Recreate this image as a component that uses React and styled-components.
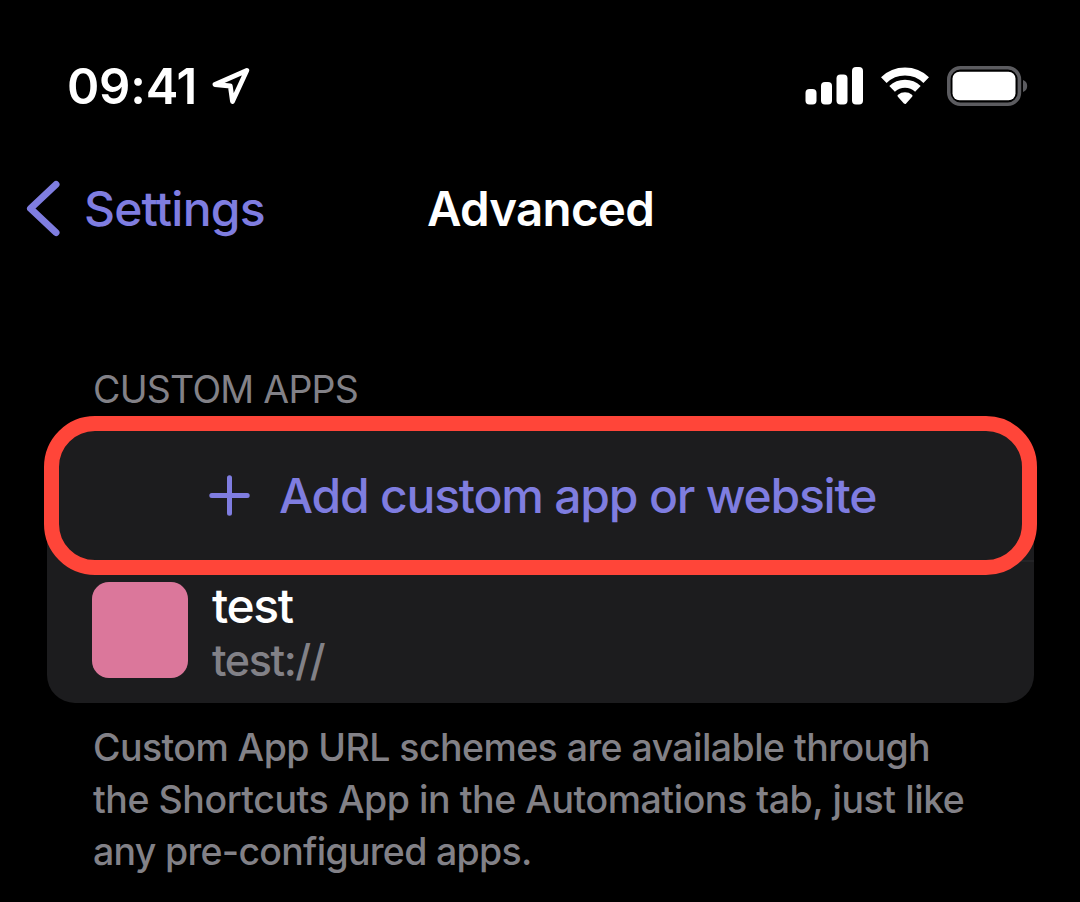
import React from 'react';
import styled, { createGlobalStyle } from 'styled-components';

const ACCENT = '#7f7de0';
const GRAY = '#828187';

const GlobalStyle = createGlobalStyle`
    * {
        box-sizing: border-box;
    }

    body {
        margin: 0;
        background-color: #000;
        font-family: Inter, 'Liberation Sans', sans-serif;
    }
`;

const Screen = styled.div`
    width: 1080px;
    height: 902px;
    overflow: hidden;
    background-color: #000;
`;

const StatusBar = styled.header`
    display: flex;
    align-items: center;
    justify-content: space-between;
    height: 172px;
    padding: 0 52px 0 67px;
`;

const StatusGroup = styled.div`
    display: flex;
    align-items: center;
    gap: ${props => props.$gap}px;
`;

const Time = styled.span`
    color: #fff;
    font-size: 49px;
    font-weight: 600;
    letter-spacing: -0.2px;
`;

const NavBar = styled.nav`
    display: grid;
    grid-template-columns: 1fr auto 1fr;
    align-items: center;
    height: 73px;
    padding: 0 24px;
`;

const BackButton = styled.button`
    display: flex;
    align-items: center;
    gap: 22px;
    padding: 0;
    border: none;
    background: none;
    color: ${ACCENT};
    font-family: inherit;
    font-size: 48px;
    font-weight: 500;
    letter-spacing: -0.8px;
    cursor: pointer;
`;

const Title = styled.h1`
    margin: 0;
    padding-left: 1px;
    color: #fff;
    font-size: 47.5px;
    font-weight: 600;
    letter-spacing: -0.75px;
`;

const Section = styled.section`
    padding: 120px 46px 0 47px;
`;

const SectionHeader = styled.h2`
    margin: 0;
    padding: 0 46px;
    color: ${GRAY};
    font-size: 37.5px;
    font-weight: 400;
    line-height: 50px;
    letter-spacing: -0.75px;
`;

const Card = styled.div`
    position: relative;
    height: 275px;
    margin-top: 13px;
    border-radius: 28px;
    background-color: #1c1c1e;
`;

const AddRow = styled.button`
    display: flex;
    align-items: center;
    width: 100%;
    height: 132px;
    padding: 3px 0 0 162px;
    gap: 29px;
    border: none;
    background: none;
    color: ${ACCENT};
    font-family: inherit;
    font-size: 48px;
    font-weight: 500;
    letter-spacing: -1.2px;
    white-space: nowrap;
    cursor: pointer;
`;

const Separator = styled.div`
    height: 2px;
    margin-left: 46px;
    background-color: #242427;
`;

const AppRow = styled.div`
    display: flex;
    align-items: center;
    height: 136px;
    padding-left: 45px;
    gap: 24px;
`;

const AppTile = styled.div`
    width: 96px;
    height: 96px;
    border-radius: 17px;
    background-color: #db779b;
`;

const AppName = styled.div`
    margin-top: 2px;
    color: #fff;
    font-size: 48px;
    font-weight: 500;
    line-height: 58px;
    letter-spacing: -1.4px;
`;

const AppUrl = styled.div`
    color: ${GRAY};
    font-size: 43px;
    font-weight: 500;
    line-height: 51px;
    letter-spacing: -1.4px;
`;

// Drawn over the card, around the "add" row
const Highlight = styled.div`
    position: absolute;
    top: -12px;
    left: -3px;
    width: 993px;
    height: 159px;
    border: 15px solid #ff4539;
    border-radius: 51px;
    pointer-events: none;
`;

const Footer = styled.p`
    margin: 19px 0 0;
    padding: 0 46px;
    color: ${GRAY};
    font-size: 37.5px;
    font-weight: 500;
    line-height: 52px;
`;

const FooterLine = styled.span`
    display: block;
    white-space: nowrap;
    letter-spacing: ${props => props.$spacing}px;
`;

const LocationIcon = () => (
    <svg width="42" height="42" viewBox="0 0 42 42" fill="none">
        <path
            d="M37.8 5.5 L6 19.5 L21.3 21 L23.5 36.5 Z"
            stroke="#fff"
            strokeWidth="4.8"
            strokeLinejoin="round"
        />
    </svg>
);

const SignalIcon = () => (
    <svg width="58" height="38" viewBox="0 0 58 38" fill="#fff">
        <rect x="0.5" y="22" width="11" height="15.5" rx="4" />
        <rect x="16" y="15" width="11" height="22.5" rx="4" />
        <rect x="31.5" y="7.5" width="11" height="30" rx="4" />
        <rect x="47" y="0" width="11" height="37.5" rx="4" />
    </svg>
);

const WifiIcon = () => (
    <svg width="50" height="38" viewBox="0 0 50 38" fill="none" stroke="#fff">
        <path d="M3.8 13.1 A30.5 30.5 0 0 1 46.2 13.1" strokeWidth="8" />
        <path d="M12.1 21.9 A18.5 18.5 0 0 1 37.9 21.9" strokeWidth="8" />
        <path
            d="M19 28.8 A9.5 9.5 0 0 1 31 28.8 L25 35.4 Z"
            fill="#fff"
            strokeWidth="3"
            strokeLinejoin="round"
        />
    </svg>
);

const BatteryIcon = () => (
    <svg width="81" height="40" viewBox="0 0 81 40">
        <rect
            x="1.8"
            y="1.8"
            width="70.6"
            height="36.4"
            rx="11.5"
            fill="none"
            stroke="#5c5c60"
            strokeWidth="3.6"
        />
        <rect x="5.5" y="5.8" width="63" height="28.4" rx="7" fill="#fff" />
        <path d="M76 14 C81.6 15.5 81.6 24.5 76 26 Z" fill="#5c5c60" />
    </svg>
);

const ChevronIcon = () => (
    <svg width="38" height="60" viewBox="0 0 38 60" fill="none">
        <path
            d="M32 5.5 L6.5 29.5 L32 53.5"
            stroke={ACCENT}
            strokeWidth="7"
            strokeLinecap="round"
            strokeLinejoin="round"
        />
    </svg>
);

const PlusIcon = () => (
    <svg width="41" height="41" viewBox="0 0 41 41" fill="none">
        <path
            d="M20.5 2.8 V38.2 M2.8 20.5 H38.2"
            stroke={ACCENT}
            strokeWidth="5"
            strokeLinecap="round"
        />
    </svg>
);

const App = () => (
    <Screen>
        <GlobalStyle />
        <StatusBar>
            <StatusGroup $gap={12}>
                <Time>09:41</Time>
                <LocationIcon />
            </StatusGroup>
            <StatusGroup $gap={17}>
                <SignalIcon />
                <WifiIcon />
                <BatteryIcon />
            </StatusGroup>
        </StatusBar>
        <NavBar>
            <BackButton>
                <ChevronIcon />
                Settings
            </BackButton>
            <Title>Advanced</Title>
        </NavBar>
        <Section>
            <SectionHeader>CUSTOM APPS</SectionHeader>
            <Card>
                <AddRow>
                    <PlusIcon />
                    Add custom app or website
                </AddRow>
                <Separator />
                <AppRow>
                    <AppTile />
                    <div>
                        <AppName>test</AppName>
                        <AppUrl>test://</AppUrl>
                    </div>
                </AppRow>
                <Highlight />
            </Card>
            <Footer>
                <FooterLine $spacing={-0.57}>
                    Custom App URL schemes are available through
                </FooterLine>
                <FooterLine $spacing={-0.45}>
                    the Shortcuts App in the Automations tab, just like
                </FooterLine>
                <FooterLine $spacing={-0.72}>
                    any pre-configured apps.
                </FooterLine>
            </Footer>
        </Section>
    </Screen>
);

export default App;
